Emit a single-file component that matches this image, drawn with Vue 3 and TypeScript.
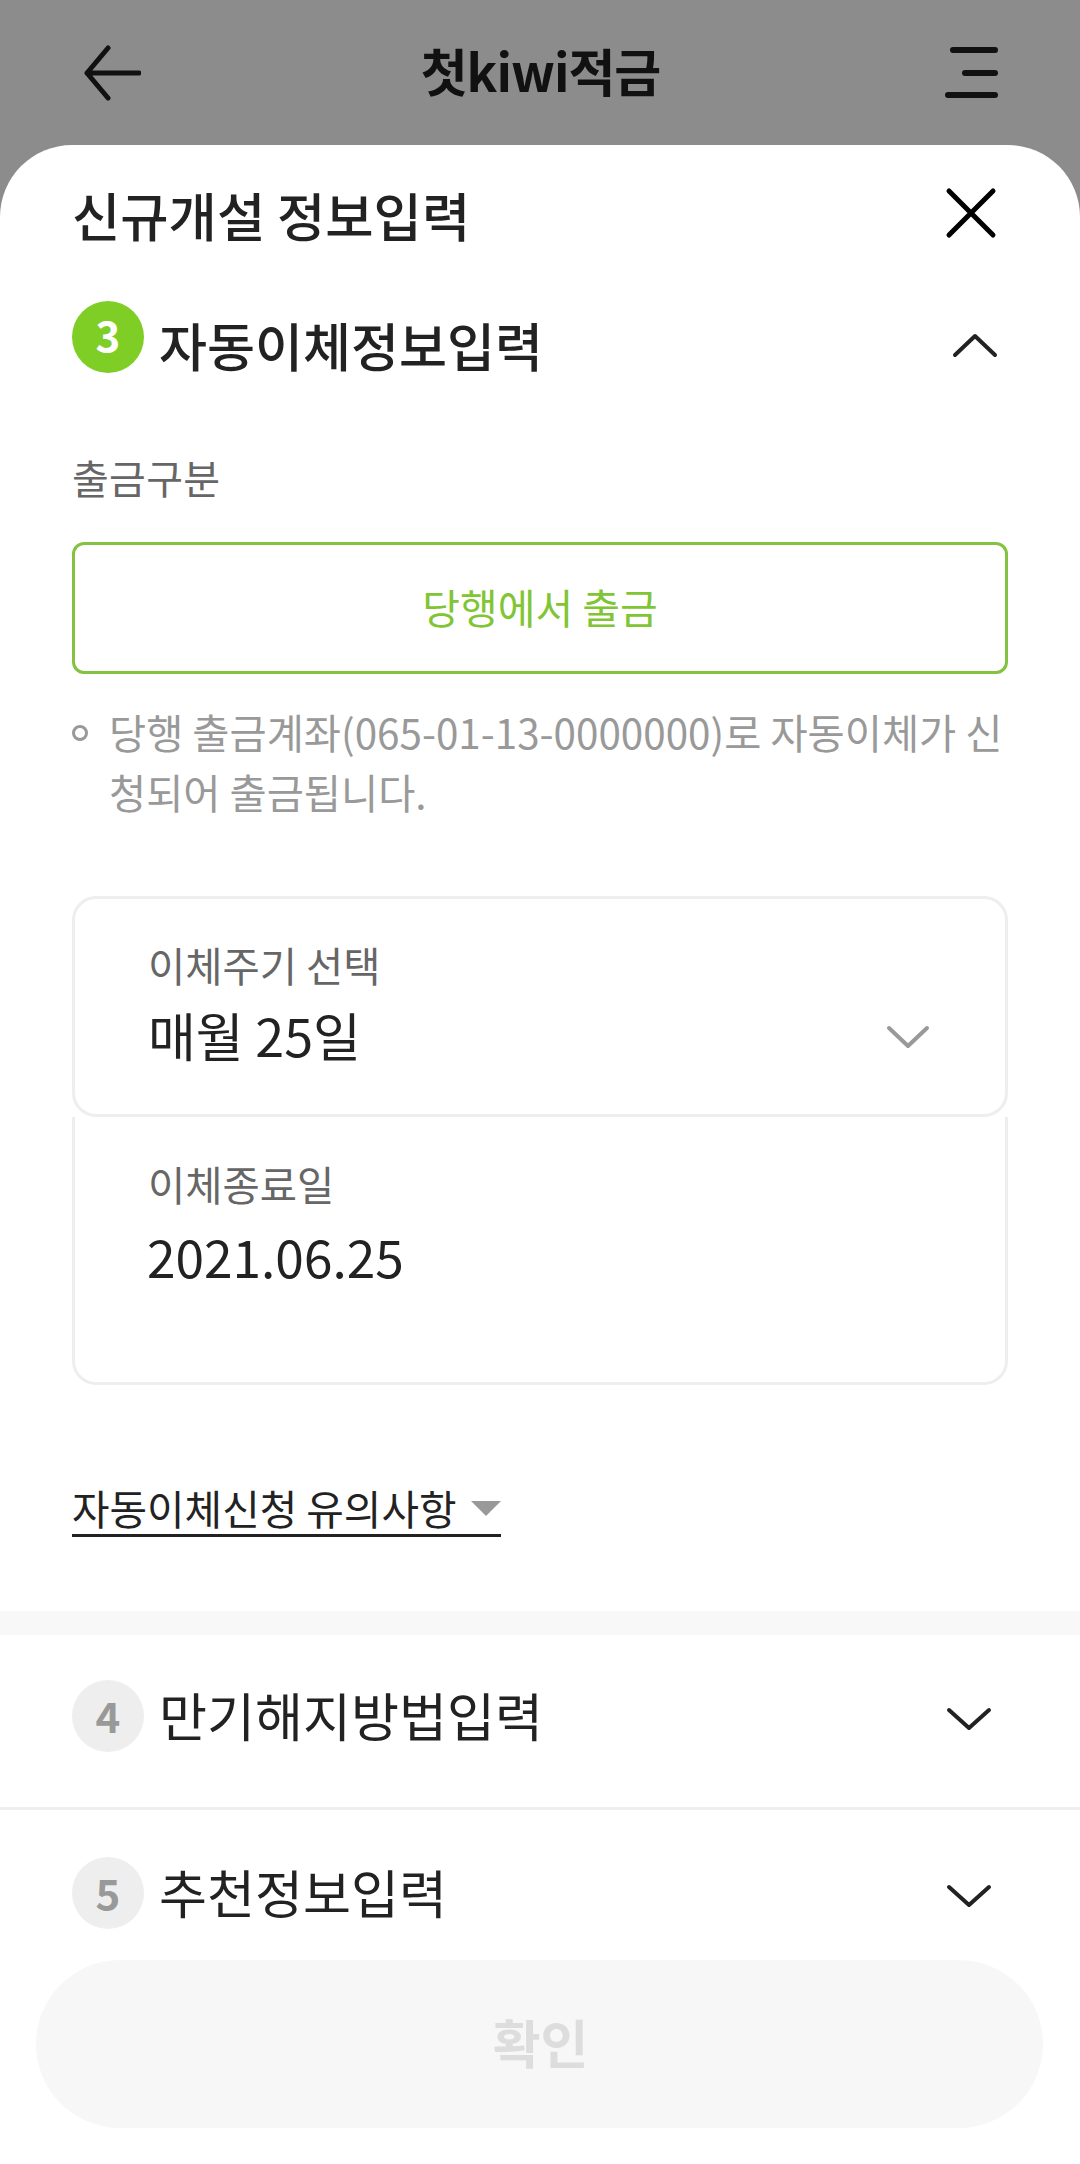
<script setup lang="ts">
const rows = [
  { n: 4, title: '만기해지방법입력' },
  { n: 5, title: '추천정보입력' },
]
</script>

<template>
  <div class="page">
    <header class="top">
      <svg class="back" width="60" height="56" viewBox="0 0 60 56" fill="none" stroke="#111" stroke-width="5" stroke-linecap="round" stroke-linejoin="round">
        <path d="M27 3 L6 28 L27 53 M6 28 H58" />
      </svg>
      <div class="top-title">첫kiwi적금</div>
      <svg class="menu" width="56" height="52" viewBox="0 0 56 52" fill="none" stroke="#111" stroke-width="6" stroke-linecap="round">
        <path d="M11 3 H53 M23 26 H53 M6 48 H53" />
      </svg>
    </header>

    <main class="sheet">
      <div class="sheet-head">
        <div class="sheet-title">신규개설 정보입력</div>
        <svg class="close" width="52" height="52" viewBox="0 0 52 52" fill="none" stroke="#000" stroke-width="5" stroke-linecap="round">
          <path d="M4 4 L48 48 M48 4 L4 48" />
        </svg>
      </div>

      <section class="step">
        <div class="step-row">
          <span class="badge on">3</span>
          <span class="step-title">자동이체정보입력</span>
          <svg class="chev-up" width="48" height="26" viewBox="0 0 48 26" fill="none" stroke="#222" stroke-width="4" stroke-linecap="round" stroke-linejoin="round">
            <path d="M4 23 L24 4 L44 23" />
          </svg>
        </div>

        <div class="field-label">출금구분</div>
        <div class="choice"><span>당행에서 출금</span></div>
        <div class="note">
          <i class="dot"></i>
          <p>당행 출금계좌(065-01-13-0000000)로 자동이체가 신청되어 출금됩니다.</p>
        </div>

        <div class="card first">
          <div class="card-label">이체주기 선택</div>
          <div class="card-line">
            <span class="card-value">매월 25일</span>
            <svg class="chev-gray" width="44" height="24" viewBox="0 0 44 24" fill="none" stroke="#999" stroke-width="4" stroke-linecap="round" stroke-linejoin="round">
              <path d="M3 3 L22 21 L41 3" />
            </svg>
          </div>
        </div>
        <div class="card second">
          <div class="card-label">이체종료일</div>
          <div class="card-value lower">2021.06.25</div>
        </div>

        <div class="link">
          <span>자동이체신청 유의사항</span>
          <i class="tri"></i>
        </div>
      </section>

      <div class="band"></div>

      <div v-for="r in rows" :key="r.n" class="fold">
        <span class="badge">{{ r.n }}</span>
        <span class="fold-title">{{ r.title }}</span>
        <svg class="chev-down" width="46" height="24" viewBox="0 0 46 24" fill="none" stroke="#222" stroke-width="4" stroke-linecap="round" stroke-linejoin="round">
          <path d="M3 3 L23 21 L43 3" />
        </svg>
      </div>

      <div class="footer">
        <div class="fade"></div>
        <button class="confirm" type="button">확인</button>
      </div>
    </main>
  </div>
</template>

<style>
html, body { margin: 0; background: #fff; }
</style>

<style scoped>
.page {
  position: relative;
  width: 1080px;
  height: 2164px;
  overflow: hidden;
  background: #8c8c8c;
  font-family: "Noto Sans CJK KR", "Noto Sans", sans-serif;
  color: #222;
}
.top {
  height: 145px;
  display: flex;
  align-items: center;
  justify-content: space-between;
  padding: 0 82px 0 81px;
  box-sizing: border-box;
}
.top-title {
  font-size: 51px;
  font-weight: 700;
  color: #111;
  line-height: 60px;
  letter-spacing: -1px;
  margin: 0 2px 6px 0;
}
.sheet {
  position: relative;
  height: 2019px;
  background: #fff;
  border-radius: 72px 72px 0 0;
  overflow: hidden;
}
.sheet-head {
  display: flex;
  justify-content: space-between;
  align-items: center;
  height: 88px;
  padding: 28px 83px 0 72px;
}
.sheet-title {
  font-size: 52.5px;
  font-weight: 500;
  line-height: 60px;
  color: #222;
  margin-bottom: 6px;
}
.close { margin-bottom: 8px; }
.step { padding: 40px 72px 0; }
.step-row {
  display: flex;
  align-items: flex-start;
  height: 92px;
}
.badge {
  flex: none;
  width: 72px;
  height: 72px;
  border-radius: 50%;
  display: flex;
  align-items: center;
  justify-content: center;
  box-sizing: border-box;
  padding-bottom: 2px;
  background: #eee;
  color: #999;
  font-size: 42px;
  font-weight: 700;
  line-height: 70px;
}
.badge.on { background: #7fce26; color: #fff; padding-bottom: 6px; }
.step-title {
  margin: 7px 0 0 15px;
  font-size: 52.2px;
  font-weight: 500;
  line-height: 72px;
  color: #222;
}
.chev-up { margin: 31px 9px 0 auto; }
.field-label {
  margin-top: 56px;
  font-size: 40px;
  letter-spacing: 0.3px;
  line-height: 56px;
  color: #666;
}
.choice {
  margin-top: 37px;
  height: 132px;
  box-sizing: border-box;
  border: 3px solid #84c341;
  border-radius: 12px;
  display: flex;
  align-items: center;
  justify-content: center;
  padding-bottom: 5px;
  font-size: 41px;
  font-weight: 400;
  color: #7fc534;
}
.note {
  display: flex;
  align-items: flex-start;
  margin-top: 28px;
  height: 121px;
}
.dot {
  flex: none;
  box-sizing: border-box;
  width: 16px;
  height: 16px;
  margin: 23px 21px 0 0;
  border: 3px solid #999;
  border-radius: 50%;
}
.note p {
  margin: 0;
  font-size: 40.4px;
  line-height: 60px;
  color: #999;
  word-break: break-all;
}
.card {
  border: 3px solid #eee;
  box-sizing: border-box;
  padding-left: 73px;
}
.first {
  margin-top: 73px;
  height: 221px;
  padding: 41px 75px 0 73px;
  border-radius: 24px;
}
.second {
  height: 268px;
  padding-top: 42px;
  border-top: none;
  border-radius: 0 0 24px 24px;
}
.card-label {
  font-size: 40.5px;
  line-height: 50px;
  color: #666;
}
.card-line {
  display: flex;
  align-items: center;
  justify-content: space-between;
  margin-top: 15px;
  height: 60px;
}
.chev-gray { margin-top: 3px; }
.card-value {
  font-size: 52px;
  line-height: 60px;
  color: #222;
}
.lower { margin-top: 17px; margin-left: -1px; font-size: 51.4px; }
.link {
  display: inline-flex;
  align-items: center;
  gap: 15px;
  margin-top: 98px;
  height: 50px;
  padding-bottom: 1px;
  border-bottom: 3px solid #222;
  font-size: 40.8px;
  line-height: 50px;
  color: #222;
  margin-bottom: 74px;
  box-sizing: content-box;
}
.tri {
  width: 0;
  height: 0;
  border-left: 15px solid transparent;
  border-right: 15px solid transparent;
  border-top: 15px solid #999;
}
.band { height: 24px; background: #f8f8f8; }
.fold {
  display: flex;
  align-items: flex-start;
  height: 172px;
  padding: 45px 88px 0 72px;
  box-sizing: border-box;
}
.fold + .fold { border-top: 3px solid #eee; height: 178px; padding-top: 47px; }
.fold-title {
  margin: -2px 0 0 15px;
  font-size: 52.2px;
  line-height: 72px;
  color: #222;
}
.chev-down { margin: 27px 0 0 auto; }
.footer {
  position: absolute;
  left: 36px;
  right: 37px;
  bottom: 36px;
}
.fade {
  position: absolute;
  left: -36px;
  right: -37px;
  top: -36px;
  height: 36px;
  background: linear-gradient(rgba(255,255,255,0), #fff);
}
.confirm {
  display: block;
  width: 100%;
  height: 168px;
  border: none;
  border-radius: 84px;
  padding: 0 0 5px 2px;
  background: #f7f7f7;
  color: #ddd;
  font-family: inherit;
  font-size: 52px;
  font-weight: 700;
}
</style>
